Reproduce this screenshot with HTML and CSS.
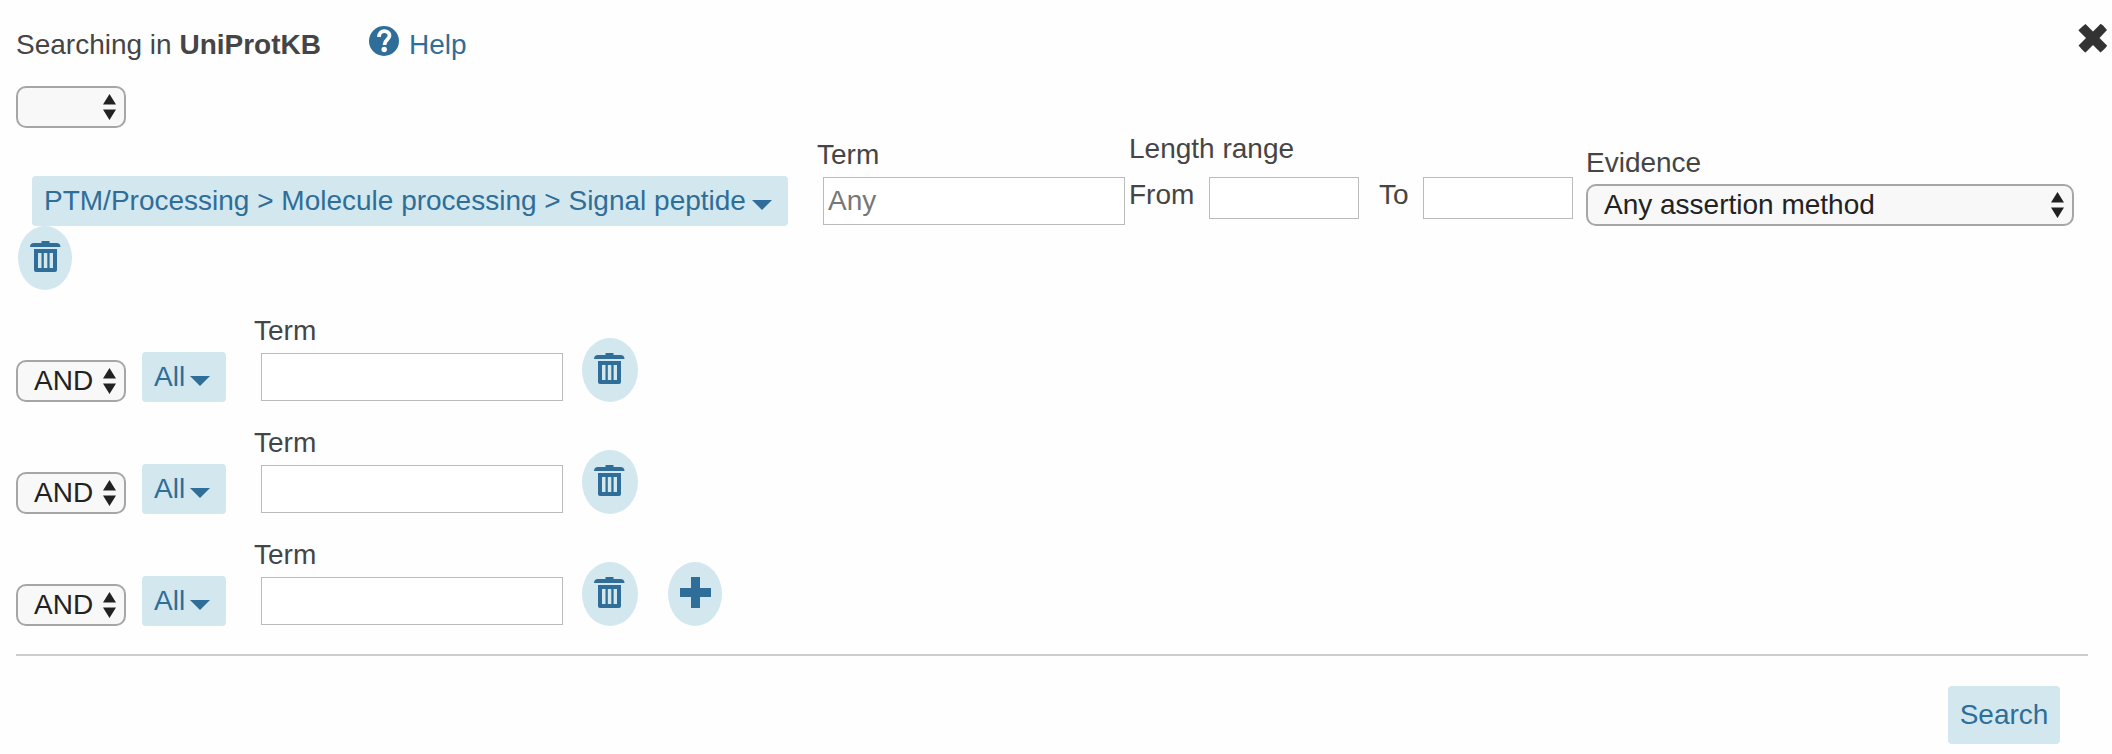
FILE: index.html
```html
<!DOCTYPE html>
<html lang="en">
<head>
<meta charset="utf-8">
<title>Advanced search</title>
<link rel="stylesheet" href="styles.css">
</head>
<body>
<svg class="defs" width="0" height="0">
  <symbol id="arrows" viewBox="0 0 13 26"><path d="M6.5 0 13 10.5H0zM0 15.5h13L6.5 26z"/></symbol>
  <symbol id="caret" viewBox="0 0 20 10"><path d="M0 0h20L10 10z"/></symbol>
  <symbol id="trash" viewBox="0 0 31 31"><path fill-rule="evenodd" d="M11.5 0h8v2h7c2.500 0 4 1.500 4 4H0c0-2.500 1.500-4 4-4h7.500zM4 8h23v21q0 2-2 2H6q-2 0-2-2zM8 12v15h3.500V12zm5.800 0v15h3.500V12zm5.800 0v15H23V12z"/></symbol>
  <symbol id="plus" viewBox="0 0 31 31"><path d="M11 0h9v11h11v9H20v11h-9V20H0v-9h11z"/></symbol>
</svg>
<form class="panel">
  <header class="header">
    <div class="scope">Searching in <b>UniProtKB</b></div>
    <a class="help"><svg class="help-icon" viewBox="0 0 30 30"><circle cx="15" cy="15" r="15"/><path class="help-mark" d="M10 11C10 2.900 20.500 3.700 20.500 9.500C20.500 14 15.500 13.500 15.500 19"/><circle class="help-dot" cx="15.200" cy="23.500" r="2.700"/></svg><span>Help</span></a>
    <svg class="close" viewBox="0 0 30 30"><path d="M7.500 1 15 8.500 22.500 1Q23.500 0 29 7L21.500 15 29 22.500Q29.500 23.500 22.500 29.500L15 22 7.500 29.500Q6.500 29.500.500 22.500L8 15 .500 7.500Q.500 6.500 7.500 1z"/></svg>
  </header>
  <div class="select op"><span></span><svg class="arrows"><use href="#arrows"/></svg></div>
  <div class="clause first">
    <button type="button" class="chip wide"><span class="path">PTM/Processing &gt; Molecule processing &gt; Signal peptide</span><svg class="caret"><use href="#caret"/></svg></button>
    <label class="field">Term<input class="term" placeholder="Any"></label>
    <div class="length"><div>Length range</div>
      <div class="range"><span class="from">From</span><input class="num"><span class="to">To</span><input class="num"></div>
    </div>
    <div class="evidence"><div>Evidence</div><div class="select method"><span>Any assertion method</span><svg class="arrows"><use href="#arrows"/></svg></div></div>
  </div>
  <button type="button" class="round remove-first"><svg><use href="#trash"/></svg></button>

  <div class="clause">
    <div class="select op"><span>AND</span><svg class="arrows"><use href="#arrows"/></svg></div>
    <button type="button" class="chip">All<svg class="caret"><use href="#caret"/></svg></button>
    <label class="field">Term<input class="term"></label>
    <button type="button" class="round"><svg><use href="#trash"/></svg></button>
  </div>
  <div class="clause">
    <div class="select op"><span>AND</span><svg class="arrows"><use href="#arrows"/></svg></div>
    <button type="button" class="chip">All<svg class="caret"><use href="#caret"/></svg></button>
    <label class="field">Term<input class="term"></label>
    <button type="button" class="round"><svg><use href="#trash"/></svg></button>
  </div>
  <div class="clause">
    <div class="select op"><span>AND</span><svg class="arrows"><use href="#arrows"/></svg></div>
    <button type="button" class="chip">All<svg class="caret"><use href="#caret"/></svg></button>
    <label class="field">Term<input class="term"></label>
    <button type="button" class="round"><svg><use href="#trash"/></svg></button>
    <button type="button" class="round add"><svg><use href="#plus"/></svg></button>
  </div>
  <footer class="footer"><button type="button" class="search">Search</button></footer>
</form>
</body>
</html>
```
FILE: styles.css
```css
* { box-sizing: border-box; }
body {
  margin: 0;
  background: #fefefe;
  color: #454545;
  font: 28px/32px "Liberation Sans", Arial, sans-serif;
}
.defs { display: block; height: 0; }
svg { display: block; fill: currentColor; flex: none; }
button, input { font: inherit; margin: 0; letter-spacing: inherit; }
button { border: 0; background: #d3e7ee; color: #2e6e99; }
.panel { height: 754px; padding: 0 24px 0 16px; overflow: hidden; white-space: nowrap; }

.header { display: flex; align-items: flex-start; height: 86px; padding-top: 23px; margin-right: -20px; }
.scope { width: 353px; padding-top: 6px; }
.help { display: flex; color: #2e6e99; padding-top: 6px; }
.help-icon { width: 30px; height: 30px; margin: -3px 10px 0 0; }
.help-mark { fill: none; stroke: #fff; stroke-width: 3.8; }
.help-dot { fill: #fff; }
.close { width: 30px; height: 30px; margin-left: auto; color: #333; }

.select {
  display: flex;
  justify-content: space-between;
  height: 42px;
  padding: 3px 8px 0 16px;
  border: 2px solid #a6a6a6;
  border-radius: 10px;
  background: #f8f8f8;
  color: #222;
}
.op { width: 110px; }
.arrows { width: 13px; height: 26px; margin-top: 3px; }
.method { width: 488px; margin-top: 5px; }

.clause { display: flex; align-items: flex-end; height: 112px; }
.first { height: 98px; align-items: flex-start; padding-left: 16px; }
.chip {
  display: flex;
  width: 84px;
  height: 50px;
  padding: 9px 0 0 12px;
  border-radius: 4px;
  margin-left: 16px;
}
.chip .caret { width: 20px; height: 10px; margin: 15px 0 0 5px; }
.wide { width: 756px; margin: 48px 0 0; }
.wide .path { width: 703px; text-align: left; }
.field { display: block; width: 309px; margin: 0 0 1px 28px; }
.first .field { margin: 11px 0 0 29px; }
.term { display: block; width: 302px; height: 48px; margin: 6px 0 0 7px; }
.first .term { margin-left: 6px; }
.term, .num {
  padding: 0 4px;
  border: 1px solid #bbb;
  border-radius: 0;
  background: #fff;
  outline: 0;
}
.term::placeholder { color: #777; opacity: 1; }
.length { width: 460px; padding: 5px 0 0 3px; }
.range { display: flex; margin-top: 12px; }
.from { width: 80px; padding-top: 2px; }
.to { width: 64px; padding: 2px 0 0 20px; }
.num { width: 150px; height: 42px; }
.evidence { padding-top: 19px; }

.round {
  display: flex;
  align-items: flex-start;
  width: 56px;
  height: 64px;
  padding: 15px 0 0 12px;
  border-radius: 50%;
  margin-left: 19px;
}
.round svg { width: 31px; height: 31px; }
.remove-first { width: 54px; margin-left: 2px; }
.add { width: 54px; margin-left: 30px; }
.footer { display: flex; justify-content: flex-end; margin-top: 28px; padding: 30px 28px 0 0; border-top: 2px solid #ccc; }
.search { width: 112px; height: 58px; padding: 0; border-radius: 4px; }
```
